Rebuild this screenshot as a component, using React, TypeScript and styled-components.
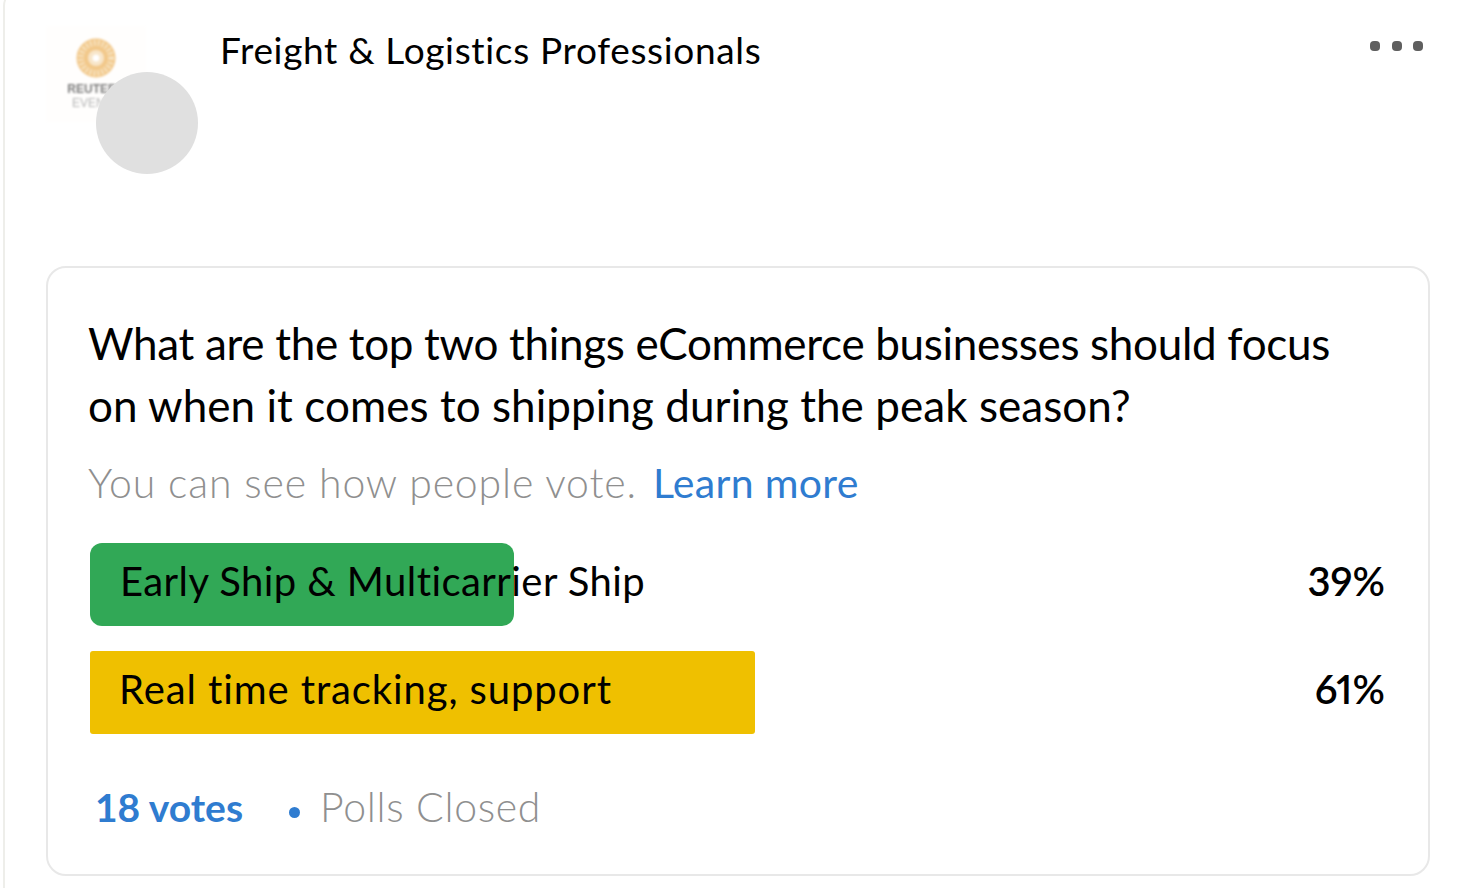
import React from "react";
import styled, { createGlobalStyle } from "styled-components";

const Global = createGlobalStyle`
  html, body { margin: 0; padding: 0; background: #fff; overflow: hidden; }
  body { font-family: Lato, "Noto Sans", sans-serif; color: #000; font-variant-ligatures: none; }
`;

const Page = styled.div`
  width: 1459px;
  height: 888px;
  overflow: hidden;
  position: relative;
`;

const Outer = styled.div`
  margin: -12px 0 0 3px;
  width: 1500px;
  height: 950px;
  border-left: 2px solid #eeeeea;
  border-top: 2px solid #eeeeea;
  border-top-left-radius: 18px;
  padding: 12px 0 0 41px;
  box-sizing: border-box;
`;

const Header = styled.header`
  display: flex;
  height: 264px;
  width: 1379px;
  padding-top: 24px;
  box-sizing: border-box;
`;

const AvatarStack = styled.div`
  position: relative;
  width: 174px;
  height: 150px;
  flex: none;
`;

const Logo = styled.div`
  width: 100px;
  height: 96px;
  display: flex;
  flex-direction: column;
  align-items: center;
  padding-top: 12px;
  box-sizing: border-box;
  background: #fffefd;
  filter: blur(0.8px);
  overflow: hidden;
`;

const LogoMark = styled.svg`
  flex: none;
  margin-bottom: 4px;
`;

const LogoLine = styled.span<{ $c: string; $w: number }>`
  font-size: 12px;
  line-height: 14px;
  color: ${(p) => p.$c};
  font-weight: ${(p) => p.$w};
  font-family: "Liberation Sans", sans-serif;
`;

const Avatar = styled.div`
  position: absolute;
  left: 50px;
  top: 46px;
  width: 102px;
  height: 102px;
  border-radius: 50%;
  background: #e0e0e0;
`;

const GroupName = styled.h2`
  margin: 0;
  flex: 1;
  font-size: 37px;
  font-weight: 400;
  line-height: 48px;
  letter-spacing: 0.67px;
`;

const Dots = styled.div`
  display: flex;
  gap: 11.5px;
  margin-top: 15px;
  margin-right: 2px;
  height: 10px;
`;

const Dot = styled.i`
  width: 10px;
  height: 10px;
  border-radius: 40%;
  background: #5f5f5f;
  filter: blur(0.4px);
`;

const Card = styled.section`
  width: 1384px;
  height: 610px;
  border: 2px solid #e8e8e8;
  border-radius: 20px;
  box-sizing: border-box;
  padding: 44px 40px 0 40px;
`;

const Question = styled.h1`
  margin: 0;
  font-size: 44px;
  font-weight: 400;
  line-height: 62px;
  white-space: nowrap;
`;

const QuestionLine = styled.span<{ $ls: number }>`
  display: block;
  letter-spacing: ${(p) => p.$ls}px;
`;

const Visibility = styled.p`
  margin: 24px 0 0;
  font-size: 41px;
  line-height: 46px;
  font-weight: 300;
  letter-spacing: 0.85px;
  color: #8f8f8f;
`;

const Link = styled.a`
  color: #2f7cd0;
  margin-left: 16px;
  font-weight: 400;
  letter-spacing: 0.3px;
`;

const Options = styled.div`
  display: flex;
  flex-direction: column;
  gap: 25px;
  margin: 37px 0 0 2px;
`;

const Option = styled.div<{ $inset: number }>`
  position: relative;
  display: flex;
  align-items: center;
  justify-content: space-between;
  height: 83px;
  padding: 0 3px 7px ${(p) => p.$inset}px;
  box-sizing: border-box;
  font-size: 40px;
`;

const Bar = styled.div<{ $c: string; $r: number }>`
  position: absolute;
  left: 0;
  top: 0;
  bottom: 0;
  background: ${(p) => p.$c};
  border-radius: ${(p) => p.$r}px;
`;

const OptionLabel = styled.span<{ $ls: number }>`
  position: relative;
  white-space: nowrap;
  letter-spacing: ${(p) => p.$ls}px;
`;

const Percent = styled.span`
  position: relative;
  font-weight: 600;
  font-variant-numeric: proportional-nums;
`;

const Footer = styled.footer`
  display: flex;
  align-items: center;
  margin: 48px 0 0 7px;
  font-size: 39px;
  line-height: 50px;
`;

const Votes = styled.a`
  color: #2f7cd0;
  font-weight: 700;
`;

const Bullet = styled.i`
  width: 11px;
  height: 11px;
  border-radius: 50%;
  background: #2f7cd0;
  margin: 10px 20px 0 46px;
`;

const Closed = styled.span`
  color: #8f8f8f;
  font-weight: 300;
  font-size: 41px;
  letter-spacing: 0.66px;
`;

const options = [
  { label: "Early Ship & Multicarrier Ship", pct: "39%", width: 424, color: "#31a856", radius: 12, ls: 0.43, inset: 30 },
  { label: "Real time tracking, support", pct: "61%", width: 664.5, color: "#efc000", radius: 3, ls: 0.9, inset: 29 },
];

export default function App() {
  return (
    <Page>
      <Global />
      <Outer>
        <Header>
          <AvatarStack>
            <Logo>
              <LogoMark width="42" height="40" viewBox="0 0 42 40">
                <circle cx="21" cy="20" r="19.5" fill="#f2c88a" />
                <circle cx="21" cy="20" r="15" fill="none" stroke="#f7e2bf" strokeWidth="6" strokeDasharray="2 2" />
                <circle cx="21" cy="20" r="8" fill="#f8e6ca" />
                <circle cx="21" cy="20" r="3.5" fill="#fff" />
              </LogoMark>
              <LogoLine $c="#7d7d7d" $w={700}>REUTERS</LogoLine>
              <LogoLine $c="#b5b5b5" $w={400}>EVENTS</LogoLine>
            </Logo>
            <Avatar />
          </AvatarStack>
          <GroupName>Freight &amp; Logistics Professionals</GroupName>
          <Dots>
            <Dot />
            <Dot />
            <Dot />
          </Dots>
        </Header>
        <Card>
          <Question>
            <QuestionLine $ls={-0.31}>What are the top two things eCommerce businesses should focus</QuestionLine>
            <QuestionLine $ls={0.06}>on when it comes to shipping during the peak season?</QuestionLine>
          </Question>
          <Visibility>
            You can see how people vote.<Link>Learn more</Link>
          </Visibility>
          <Options>
            {options.map((o) => (
              <Option key={o.label} $inset={o.inset}>
                <Bar $c={o.color} $r={o.radius} style={{ width: o.width }} />
                <OptionLabel $ls={o.ls}>{o.label}</OptionLabel>
                <Percent>{o.pct}</Percent>
              </Option>
            ))}
          </Options>
          <Footer>
            <Votes>18 votes</Votes>
            <Bullet />
            <Closed>Polls Closed</Closed>
          </Footer>
        </Card>
      </Outer>
    </Page>
  );
}
